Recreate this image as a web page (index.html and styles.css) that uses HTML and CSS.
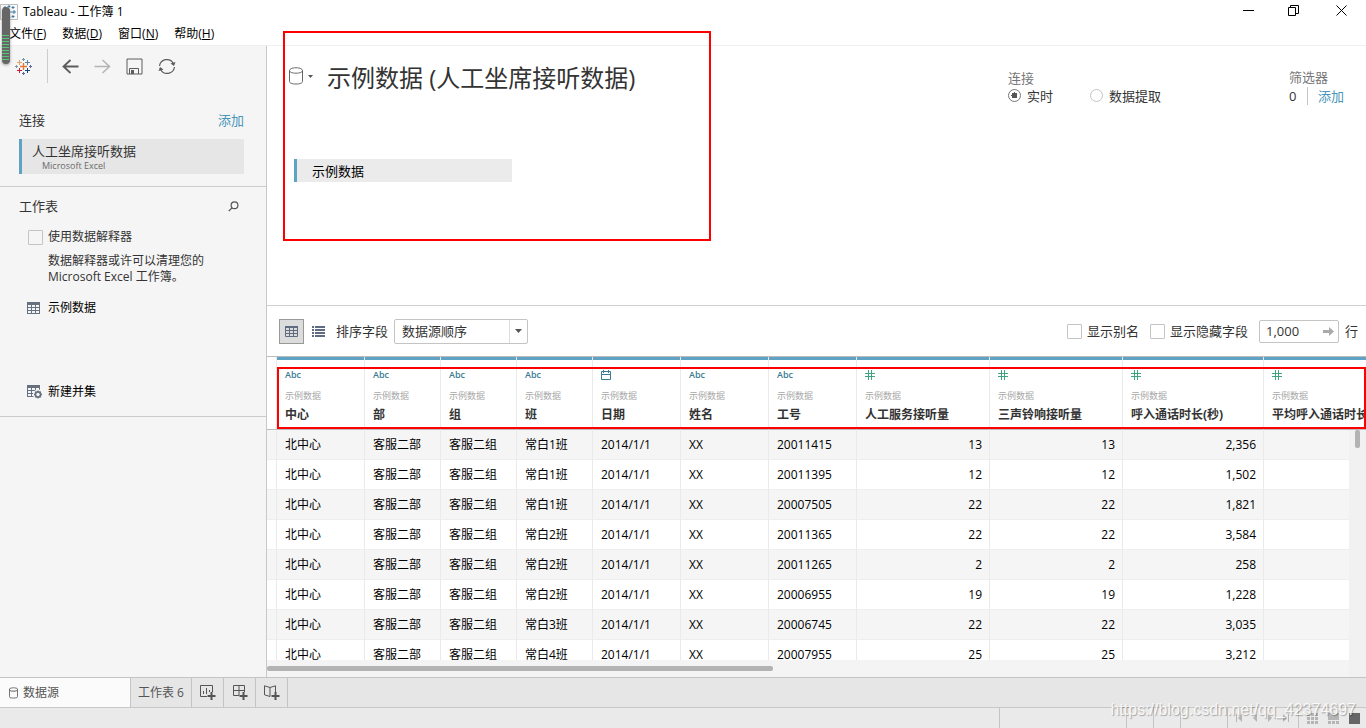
FILE: index.html
```html
<!DOCTYPE html>
<html lang="zh-CN">
<head>
<meta charset="utf-8">
<title>Tableau - 工作簿 1</title>
<link rel="stylesheet" href="styles.css">
</head>
<body>
<svg class="defs" aria-hidden="true">
  <symbol id="i-table" viewBox="0 0 13 12"><path fill="currentColor" d="M0 0h13v12H0z"/><path fill="#f5f5f5" d="M1 3h3v2H1zM5 3h3v2H5zM9 3h3v2H9zM1 6h3v2H1zM5 6h3v2H5zM9 6h3v2H9zM1 9h3v2H1zM5 9h3v2H5zM9 9h3v2H9z"/></symbol>
  <symbol id="i-hash" viewBox="0 0 10 10"><path d="M3.5 0v10M6.500 0v10M0 3.500h10M0 6.500h10" stroke="currentColor" fill="none"/></symbol>
  <symbol id="i-cyl" viewBox="0 0 14 18"><path d="M.5 3.500v11c0 1.500 2.500 2.500 6.500 2.500s6.500-1 6.500-2.500v-11M7 .8c4 0 6.500 1.200 6.500 2.700S11 6.200 7 6.200.5 5 .5 3.500 3 .8 7 .8z" stroke="currentColor" fill="none"/></symbol>
</svg>
<div class="app">
  <header class="titlebar">
    <svg class="app-icon" width="18" height="16" viewBox="0 0 18 16"><path fill="#fafafa" stroke="#bbb" d="M.5.500h17v15H.5z"/><g fill="none" stroke="#3d7ba5"><path d="M9 5v6M6 8h6M9 1v3M7.500 2.500h3M9 12v3M7.500 13.500h3M14 6v4M12 8h4M4 6v4M2 8h4M5 2v3M3.500 3.500h3M13 2v3M11.500 3.500h3M5 11v3M3.500 12.500h3M13 11v3M11.500 12.500h3"/></g></svg>
    <span class="app-title">Tableau - 工作簿 1</span>
    <div class="window-buttons">
      <button aria-label="最小化"><svg width="11" height="11"><path d="M0 5.500h11" stroke="#000"/></svg></button>
      <button aria-label="还原"><svg width="11" height="11"><path d="M.5 2.500h7v8h-7zM2.500 2.500v-2h8v8h-3" stroke="#000" fill="none"/></svg></button>
      <button aria-label="关闭"><svg width="11" height="11"><path d="M.5.500l10 10M10.500.500l-10 10" stroke="#000"/></svg></button>
    </div>
  </header>
  <nav class="menubar">
    <button>文件(<u>F</u>)</button><button>数据(<u>D</u>)</button><button>窗口(<u>N</u>)</button><button>帮助(<u>H</u>)</button>
  </nav>
  <div class="level-widget"></div>

  <div class="content">
    <aside class="sidebar">
      <div class="toolbar">
        <button aria-label="起始页"><svg width="17" height="17" viewBox="0 0 17 17" fill="none"><path d="M8.500 5v7M5 8.500h7" stroke="#e8762d" stroke-width="1.300"/><path d="M4.500 2v5M2 4.500h5" stroke="#e8a064"/><path d="M12.500 2v5M10 4.500h5" stroke="#5b879b"/><path d="M4.500 10v5M2 12.500h5" stroke="#c72035"/><path d="M12.500 10v5M10 12.500h5" stroke="#1f457e"/><path d="M8.500 0v3M7 1.500h3M1.500 7v3M0 8.500h3" stroke="#7199a6"/><path d="M15.500 7v3M14 8.500h3M8.500 14v3M7 15.500h3" stroke="#6068a0"/></svg></button>
        <i class="rule"></i>
        <button class="dark" aria-label="后退"><svg width="17" height="17" viewBox="0 0 17 17" fill="none" stroke="currentColor" stroke-width="1.800"><path d="M16.500 8.500H1.500M8.500 2L1.500 8.500l7 6.500"/></svg></button>
        <button class="pale" aria-label="前进"><svg width="17" height="17" viewBox="0 0 17 17" fill="none" stroke="currentColor" stroke-width="1.500"><path d="M.5 8.500h15M8.500 2l7 6.500-7 6.500"/></svg></button>
        <button class="dark" aria-label="保存"><svg width="17" height="17" viewBox="0 0 17 17"><path d="M1 1h15v15H1zM3.500 16v-5.500h9V16" fill="none" stroke="currentColor"/><path d="M5 12h3v4H5z" fill="currentColor"/></svg></button>
        <button class="dark" aria-label="刷新"><svg width="18" height="17" viewBox="0 0 18 17" fill="none" stroke="currentColor" stroke-width="1.200"><path d="M1.500 8A7.500 7.500 0 0 1 15.500 5.500M16.500 9A7.500 7.500 0 0 1 2.500 11.500"/><path d="M17.500 4l-1.500 4-3.500-2.500zM.5 13L2 9l3.500 2.500z" fill="currentColor" stroke="none"/></svg></button>
      </div>
      <section class="connections">
        <div class="heading"><h2>连接</h2><a href="#add">添加</a></div>
        <div class="connection"><strong>人工坐席接听数据</strong><small>Microsoft Excel</small></div>
      </section>
      <section class="sheets">
        <div class="heading"><h2>工作表</h2><button aria-label="搜索"><svg width="11" height="11" fill="none" stroke="#555" stroke-width="1.200"><circle cx="6.500" cy="4.200" r="3.400"/><path d="M4 6.800L.8 10"/></svg></button></div>
        <label class="interpreter"><input type="checkbox">使用数据解释器</label>
        <p>数据解释器或许可以清理您的<br>Microsoft Excel 工作簿。</p>
        <button class="sheet-item"><svg width="13" height="12"><use href="#i-table"/></svg>示例数据</button>
        <button class="sheet-item union"><svg width="16" height="14" viewBox="0 0 16 14"><path fill="currentColor" d="M0 0h13v12H0z"/><path fill="#f5f5f5" d="M1 3h3v2H1zM5 3h3v2H5zM9 3h3v2H9zM1 6h3v2H1zM5 6h3v2H5zM9 6h3v2H9zM1 9h3v2H1zM5 9h3v2H5z"/><circle cx="11" cy="9.500" r="5" fill="#f5f5f5"/><circle cx="11" cy="9.500" r="2.600" fill="none" stroke="currentColor" stroke-width="1.600"/><path d="M11 5.500v8M7 9.500h8M8.200 6.700l5.600 5.600M13.800 6.700l-5.600 5.600" stroke="currentColor" stroke-width="1.300"/><circle cx="11" cy="9.500" r="1.700" fill="#f5f5f5"/></svg>新建并集</button>
      </section>
    </aside>

    <main class="workspace">
      <section class="canvas">
        <div class="source">
          <button class="source-menu" aria-label="数据源"><svg width="14" height="18"><use href="#i-cyl"/></svg><svg width="5" height="3"><path d="M0 0h5L2.500 3z" fill="#555"/></svg></button>
          <h1>示例数据 (人工坐席接听数据)</h1>
        </div>
        <div class="options">
          <fieldset class="mode">
            <legend>连接</legend>
            <label><input type="radio" name="mode" checked>实时</label>
            <label><input type="radio" name="mode">数据提取</label>
          </fieldset>
          <div class="filters"><span>筛选器</span><div><b>0</b><a href="#filter">添加</a></div></div>
        </div>
        <button class="chip">示例数据</button>
        <div class="mark mark-canvas"></div>
      </section>

      <section class="gridbar">
        <button class="view-grid" aria-label="预览数据源"><svg width="13" height="11" viewBox="0 0 13 11" fill="none" stroke="#5f6b80"><path d="M0 1h13" stroke-width="2"/><path d="M.5 0v10.500h12V0M0 4.500h13M0 7.500h13M4.500 1v10M8.500 1v10"/></svg></button>
        <button class="view-list" aria-label="管理元数据"><svg width="13" height="11" fill="#5f6b80"><path d="M0 0h2v2H0zM3 0h10v2H3zM0 3h2v2H0zM3 3h10v2H3zM0 6h2v2H0zM3 6h10v2H3zM0 9h2v2H0zM3 9h10v2H3z"/></svg></button>
        <label for="sort">排序字段</label>
        <div class="select"><select id="sort"><option>数据源顺序</option></select><span><svg width="7" height="4"><path d="M0 0h7L3.500 4z" fill="#555"/></svg></span></div>
        <div class="grid-options">
          <label><input type="checkbox">显示别名</label>
          <label><input type="checkbox">显示隐藏字段</label>
          <div class="rows"><input id="rows" type="text" value="1,000"><svg width="11" height="9"><path d="M0 3h6V0l5 4.500L6 9V6H0z" fill="#aaa"/></svg></div>
          <label for="rows">行</label>
        </div>
      </section>

      <section class="grid">
        <div class="grid-view">
        <table>
          <colgroup><col class="w-gutter"><col class="w-m"><col class="w-s"><col class="w-s"><col class="w-s"><col class="w-m"><col class="w-m"><col class="w-m"><col class="w-l"><col class="w-l"><col class="w-xl"><col class="w-xl"></colgroup>
          <thead><tr>
            <td></td>
            <th><i>Abc</i><small>示例数据</small>中心</th>
            <th><i>Abc</i><small>示例数据</small>部</th>
            <th><i>Abc</i><small>示例数据</small>组</th>
            <th><i>Abc</i><small>示例数据</small>班</th>
            <th><i><svg width="10" height="10" viewBox="0 0 10 10" fill="none" stroke="currentColor"><path d="M.5 1.500h9v8h-9zM0 4.500h10M2.500 0v3M7.500 0v3"/></svg></i><small>示例数据</small>日期</th>
            <th><i>Abc</i><small>示例数据</small>姓名</th>
            <th><i>Abc</i><small>示例数据</small>工号</th>
            <th><i class="num"><svg width="10" height="10"><use href="#i-hash"/></svg></i><small>示例数据</small>人工服务接听量</th>
            <th><i class="num"><svg width="10" height="10"><use href="#i-hash"/></svg></i><small>示例数据</small>三声铃响接听量</th>
            <th><i class="num"><svg width="10" height="10"><use href="#i-hash"/></svg></i><small>示例数据</small>呼入通话时长(秒)</th>
            <th><i class="num"><svg width="10" height="10"><use href="#i-hash"/></svg></i><small>示例数据</small>平均呼入通话时长</th>
          </tr></thead>
          <tbody>
            <tr><td></td><td>北中心</td><td>客服二部</td><td>客服二组</td><td>常白1班</td><td>2014/1/1</td><td>XX</td><td>20011415</td><td>13</td><td>13</td><td>2,356</td><td></td></tr>
            <tr><td></td><td>北中心</td><td>客服二部</td><td>客服二组</td><td>常白1班</td><td>2014/1/1</td><td>XX</td><td>20011395</td><td>12</td><td>12</td><td>1,502</td><td></td></tr>
            <tr><td></td><td>北中心</td><td>客服二部</td><td>客服二组</td><td>常白1班</td><td>2014/1/1</td><td>XX</td><td>20007505</td><td>22</td><td>22</td><td>1,821</td><td></td></tr>
            <tr><td></td><td>北中心</td><td>客服二部</td><td>客服二组</td><td>常白2班</td><td>2014/1/1</td><td>XX</td><td>20011365</td><td>22</td><td>22</td><td>3,584</td><td></td></tr>
            <tr><td></td><td>北中心</td><td>客服二部</td><td>客服二组</td><td>常白2班</td><td>2014/1/1</td><td>XX</td><td>20011265</td><td>2</td><td>2</td><td>258</td><td></td></tr>
            <tr><td></td><td>北中心</td><td>客服二部</td><td>客服二组</td><td>常白2班</td><td>2014/1/1</td><td>XX</td><td>20006955</td><td>19</td><td>19</td><td>1,228</td><td></td></tr>
            <tr><td></td><td>北中心</td><td>客服二部</td><td>客服二组</td><td>常白3班</td><td>2014/1/1</td><td>XX</td><td>20006745</td><td>22</td><td>22</td><td>3,035</td><td></td></tr>
            <tr><td></td><td>北中心</td><td>客服二部</td><td>客服二组</td><td>常白4班</td><td>2014/1/1</td><td>XX</td><td>20007955</td><td>25</td><td>25</td><td>3,212</td><td></td></tr>
          </tbody>
        </table>
        </div>
        <div class="hscroll"><i></i></div>
        <div class="vscroll"><i></i></div>
        <div class="mark mark-header"></div>
      </section>
    </main>
  </div>

  <nav class="tabs">
    <button class="tab-source"><svg width="9" height="12" viewBox="0 0 14 18" stroke-width="1.500"><use href="#i-cyl" width="14" height="18"/></svg>数据源</button>
    <button class="tab-sheet">工作表 6</button>
    <button class="tab-new" aria-label="新建工作表"><svg width="16" height="15" fill="none" stroke="#555"><path d="M12.500 7V.500H.5v11H7M3.500 9V6M6.500 9V3M9.500 7V5"/><path d="M11.500 7v8M7.500 11h8" stroke-width="2"/></svg></button>
    <button class="tab-new" aria-label="新建仪表板"><svg width="16" height="15" fill="none" stroke="#555"><path d="M12.500 7V.500H1.500v10H7M7 .500v10M1.500 5.500h11"/><path d="M11.500 7v8M7.500 11h8" stroke-width="2"/></svg></button>
    <button class="tab-new" aria-label="新建故事"><svg width="16" height="15" fill="none" stroke="#555"><path d="M11.500 7V.800L6 2.500.5.800v9L6 11.500M6 2.500v9"/><path d="M11.500 7v8M7.500 11h8" stroke-width="2"/></svg></button>
  </nav>
  <footer class="status">
    <span class="c-wide"></span><span class="c-thin"></span><span class="c-thin"></span><span class="c-mid"></span>
    <div class="pager">
      <button aria-label="第一个"><svg width="7" height="8" fill="#b5b5b5"><path d="M0 0h1v8H0zM6 0v8L2 4z"/></svg></button>
      <button aria-label="上一个"><svg width="5" height="8" fill="#b5b5b5"><path d="M4 0v8L0 4z"/></svg></button>
      <button aria-label="下一个"><svg width="5" height="8" fill="#b5b5b5"><path d="M0 0v8l4-4z"/></svg></button>
      <button aria-label="最后一个"><svg width="7" height="8" fill="#b5b5b5"><path d="M0 0v8l4-4zM5 0h1v8H5z"/></svg></button>
    </div>
    <div class="sorters">
      <button aria-label="标签"><svg width="11" height="11" fill="#b5b5b5"><path d="M0 0h3v3H0zM4 0h3v3H4zM8 0h3v3H8zM0 4h3v3H0zM4 4h3v3H4zM8 4h3v3H8zM0 8h3v3H0zM4 8h3v3H4zM8 8h3v3H8z"/></svg></button>
      <button aria-label="缩略图"><svg width="11" height="11" fill="#b5b5b5"><path d="M0 0h11v7H0zM0 8h3v3H0zM4 8h3v3H4zM8 8h3v3H8z"/></svg></button>
      <button aria-label="单页"><svg width="11" height="11"><path d="M0 0h11v11H0z" fill="#666"/></svg></button>
    </div>
    <span class="watermark">https://blog.csdn.net/qq_42374697</span>
  </footer>
</div>
</body>
</html>
```
FILE: styles.css
```css
* { box-sizing: border-box; }
body { margin: 0; background: #fff; color: #333; font: 13px/18px "Open Sans", "Noto Sans CJK SC", sans-serif; }
button { display: flex; align-items: center; justify-content: center; padding: 0; border: 0; background: none; color: inherit; font: inherit; }
h1, h2, p { margin: 0; font-weight: 400; }
h2 { font-size: 13px; }
a { color: #4996b8; text-decoration: none; }
svg { display: block; flex: none; }
input[type="checkbox"] { appearance: none; width: 15px; height: 15px; margin: 0; border: 1px solid #c4c4c4; border-radius: 1px; background: none; }
.defs { position: absolute; width: 0; height: 0; }
.app { position: relative; display: flex; flex-direction: column; height: 100vh; overflow: hidden; }

.titlebar { display: flex; align-items: center; flex: none; height: 23px; color: #000; font-size: 12px; }
.app-title { margin-left: 5px; }
.window-buttons { display: flex; align-self: flex-start; margin-left: auto; }
.window-buttons button { width: 45px; height: 21px; }
.window-buttons button:last-child { width: 50px; }
.menubar { display: flex; gap: 16px; flex: none; height: 23px; padding-left: 9px; border-bottom: 1px solid #f0f0f0; color: #000; font-size: 12px; }
.level-widget { position: absolute; left: 2px; top: 7px; width: 8px; height: 57px; border-radius: 4px; background: repeating-linear-gradient(#54c878 0 1px, #666 1px 3px) 0 28px / 7px 27px no-repeat #666; box-shadow: 0 1px 3px #999; }

.content { display: flex; flex: 1; min-height: 0; }
.sidebar { flex: none; width: 267px; border-right: 1px solid #c8c8c8; background: #f5f5f5; }
.toolbar { display: flex; align-items: center; height: 40px; padding-left: 15px; }
.toolbar .rule { width: 1px; height: 34px; margin: 0 14px 0 15px; background: #ccc; }
.toolbar button + button { margin-left: 15px; }
.dark { color: #5c5c5c; }
.pale { color: #b4b4b4; }
.heading { display: flex; align-items: center; justify-content: space-between; }
.connections { padding: 25px 22px 12px 19px; border-bottom: 1px solid #ccc; }
.connection { display: flex; flex-direction: column; height: 35px; margin-top: 10px; padding: 3px 0 0 10px; border-left: 3px solid #5fa3c4; background: #e6e6e6; }
.connection strong { font-weight: 400; line-height: 18px; }
.connection small { padding-left: 10px; color: #6b6b6b; font-size: 9px; line-height: 12px; }
.sheets { padding: 10px 27px 14px 19px; border-bottom: 1px solid #ccc; font-size: 12px; }
.interpreter { display: flex; align-items: center; gap: 5px; margin: 13px 0 7px 9px; }
.sheets p { margin-left: 29px; line-height: 16px; }
.sheet-item { height: 20px; margin: 13px 0 0 8px; gap: 8px; color: #000; }
.sheet-item svg { color: #66707f; }
.sheet-item.union { gap: 5px; margin-top: 64px; }

.workspace { display: flex; flex: 1; flex-direction: column; min-width: 0; }
.canvas { position: relative; display: grid; grid-template-columns: 1fr auto; grid-template-rows: 113px auto; flex: none; height: 260px; border-bottom: 1px solid #d0d0d0; }
.source { display: flex; align-items: flex-start; padding: 14px 0 0 22px; }
.source-menu { gap: 5px; margin-top: 7px; color: #666; }
h1 { margin-left: 14px; font-size: 24px; line-height: 36px; }
.options { display: flex; padding: 22px 22px 0 0; color: #333; }
.mode { display: flex; margin: 1px 128px 0 0; padding: 0; border: 0; }
.mode legend { padding: 0; color: #777; }
.mode label { display: flex; align-items: center; gap: 6px; height: 17px; }
.mode label + label { margin-left: 37px; }
input[type="radio"] { appearance: none; width: 13px; height: 13px; margin: 0; border: 1px solid #c4c4c4; border-radius: 50%; }
input[type="radio"]:checked { border-color: #777; background: radial-gradient(circle, #555 0 3px, transparent 3px); }
.filters { color: #777; }
.filters span { display: block; line-height: 18px; }
.filters div { display: flex; height: 20px; align-items: center; }
.filters b { width: 18px; color: #333; font-weight: 400; }
.filters a { padding-left: 10px; border-left: 1px solid #c4c4c4; }
.chip { justify-content: flex-start; width: 218px; height: 23px; margin-left: 27px; padding-left: 15px; border-left: 3px solid #5fa3c4; background: #ebebeb; color: #000; }
.mark { position: absolute; border: 2px solid #f00; pointer-events: none; }
.mark-canvas { left: 16px; top: -15px; width: 428px; height: 210px; }
.mark-header { left: 10px; right: 0; top: 10px; height: 62px; }

.gridbar { display: flex; align-items: center; flex: none; height: 51px; padding: 0 8px 0 12px; border-bottom: 1px solid #bbb; }
.view-grid { width: 25px; height: 25px; border: 1px solid #999; background: #dcdcdc; }
.view-list { margin: 0 11px 0 8px; }
.select { display: flex; position: relative; width: 134px; height: 25px; margin-left: 6px; border: 1px solid #c4c4c4; border-radius: 2px; }
.select select { flex: 1; appearance: none; padding: 0 0 0 7px; border: 0; background: none; color: #333; font: inherit; }
.select span { display: flex; align-items: center; justify-content: center; width: 18px; border-left: 1px solid #ddd; pointer-events: none; }
.grid-options { display: flex; align-items: center; margin-left: auto; }
.grid-options label { display: flex; align-items: center; gap: 5px; margin-right: 11px; }
.grid-options label:last-child { margin: 0 0 0 6px; }
.rows { display: flex; align-items: center; width: 80px; height: 23px; padding-right: 4px; border: 1px solid #c4c4c4; border-radius: 2px; }
.rows input { flex: 1; min-width: 0; padding: 0 0 0 6px; border: 0; background: none; color: #333; font: inherit; }

.grid { position: relative; display: flex; flex: 1; flex-direction: column; min-height: 0; overflow: hidden; }
.grid-view { flex: 1; min-height: 0; overflow: hidden; }
table { width: 1110px; border-spacing: 0; table-layout: fixed; color: #000; font-size: 12px; }
.w-gutter { width: 10px; } .w-s { width: 76px; } .w-m { width: 88px; } .w-l { width: 133px; } .w-xl { width: 141px; }
th, td { padding: 0 7px 0 8px; border-right: 1px solid #eaeaea; text-align: left; white-space: nowrap; overflow: hidden; }
thead td, thead th { height: 73px; border-bottom: 1px solid #bbb; }
thead th { padding-top: 9px; background: linear-gradient(#5fa3c4, #5fa3c4) 0 0 / 100% 3px no-repeat; background-clip: padding-box; color: #333; font-weight: 700; line-height: 18px; vertical-align: top; }
th i { display: flex; align-items: center; height: 17px; color: #3a7b94; font: 600 9px/17px "Open Sans", sans-serif; }
th i.num { color: #3ea384; }
th small { display: block; margin: 4px 0 2px; color: #a8a8a8; font-size: 9px; font-weight: 400; line-height: 17px; }
tbody td { height: 30px; border-bottom: 1px solid #eee; }
tbody tr:nth-child(odd) { background: #f5f5f5; }
tbody td:nth-child(n+9) { text-align: right; }
.hscroll { flex: none; height: 17px; padding-top: 6px; background: #f4f4f4; }
.hscroll i { display: block; width: 46%; height: 5px; border-radius: 2px; background: #b3b3b3; }
.vscroll { position: absolute; top: 73px; right: 0; bottom: 0; width: 17px; padding-left: 6px; background: #f1f1f1; }
.vscroll i { display: block; width: 5px; height: 18px; border-radius: 2px; background: #b3b3b3; }

.tabs { display: flex; flex: none; height: 30px; border-top: 1px solid #c4c4c4; background: #e6e6e6; color: #555; font-size: 12px; }
.tabs button { border-right: 1px solid #c4c4c4; }
.tabs .tab-source { justify-content: flex-start; gap: 5px; width: 131px; padding-left: 9px; background: #fbfbfb; }
.tab-sheet { width: 61px; }
.tab-new { width: 32px; }
.status { position: relative; display: flex; flex: none; justify-content: flex-end; height: 21px; border-top: 1px solid #c8c8c8; background: #eaeaea; }
.status > span:not(.watermark) { border-left: 1px solid #c4c4c4; }
.c-wide { width: 127px; } .c-thin { width: 27px; } .c-mid { width: 47px; }
.pager, .sorters { display: flex; align-items: center; border-left: 1px solid #c4c4c4; }
.pager { justify-content: space-between; width: 71px; padding: 0 8px; }
.sorters { gap: 10px; width: 68px; padding-left: 8px; }
.watermark { position: absolute; right: 10px; top: -7px; color: rgba(255,255,255,.85); font: 16px/18px "Liberation Sans", sans-serif; text-shadow: 1px 1px 1px rgba(0,0,0,.3); }
```
